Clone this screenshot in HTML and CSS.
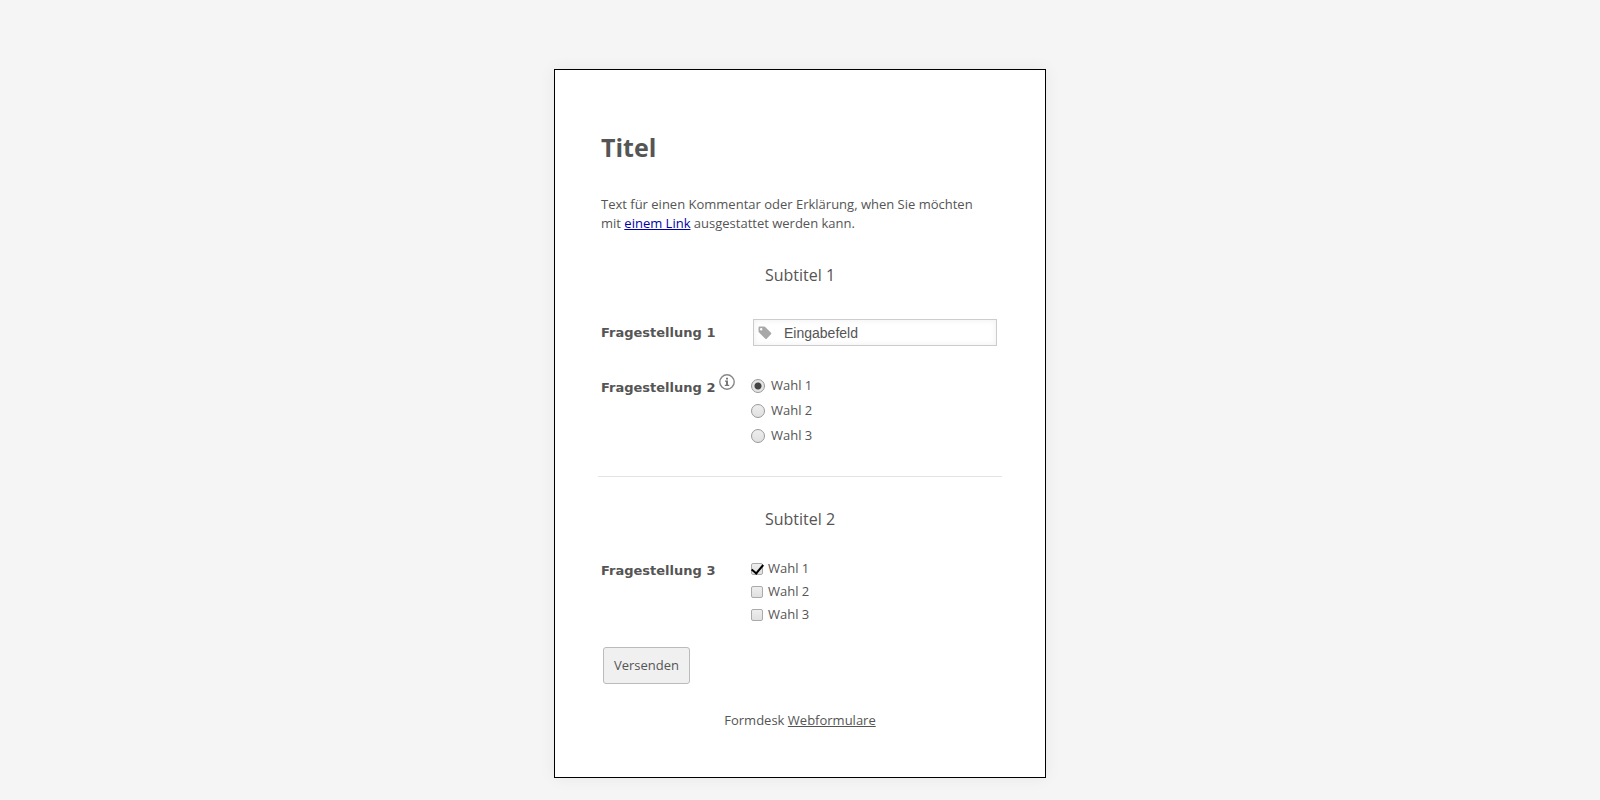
FILE: index.html
```
<!DOCTYPE html>
<html lang="de">
<head>
  <meta charset="utf-8">
  <title>Formular</title>
  <link rel="stylesheet" href="styles.css">
</head>
<body>
  <main class="form-card">
    <form>
      <h1 class="title">Titel</h1>
      <p class="intro">Text für einen Kommentar oder Erklärung, when Sie möchten mit <a href="#">einem Link</a> ausgestattet werden kann.</p>

      <h2 class="subtitle">Subtitel 1</h2>

      <div class="row input-row">
        <label class="question" for="frage1">Fragestellung 1</label>
        <div class="input-box">
          <svg class="tag-icon" viewBox="0 0 14 14" aria-hidden="true">
            <path fill="#a8a8a8" fill-rule="evenodd" d="M1.6 0.5H6Q6.7 0.5 7.2 1L13 6.8Q13.7 7.5 13 8.2L8.7 12.7Q8 13.4 7.3 12.7L1.1 6.5Q0.5 6 0.5 5.2V1.6Q0.5 0.5 1.6 0.5ZM3.2 2A1.2 1.2 0 1 0 3.2 4.4A1.2 1.2 0 1 0 3.2 2Z"/>
          </svg>
          <input type="text" id="frage1" value="Eingabefeld">
        </div>
      </div>

      <div class="row radio-row" role="radiogroup" aria-labelledby="frage2">
        <div class="question">
          <span id="frage2">Fragestellung 2</span>
          <svg class="info-icon" viewBox="0 0 16 16" aria-hidden="true">
            <circle cx="8" cy="8" r="7.2" fill="#fff" stroke="#888" stroke-width="1.4"/>
            <path fill="#777" d="M7 3.8h2v1.8h-2zM6 6.6h3v4.2h1.2v1.2h-4.4v-1.2h1.2v-3h-1z"/>
          </svg>
        </div>
        <div class="options">
          <label><input type="radio" name="wahl" checked>Wahl 1</label>
          <label><input type="radio" name="wahl">Wahl 2</label>
          <label><input type="radio" name="wahl">Wahl 3</label>
        </div>
      </div>

      <hr>

      <h2 class="subtitle">Subtitel 2</h2>

      <div class="row check-row" role="group" aria-labelledby="frage3">
        <div class="question" id="frage3">Fragestellung 3</div>
        <div class="options">
          <label><input type="checkbox" checked>Wahl 1</label>
          <label><input type="checkbox">Wahl 2</label>
          <label><input type="checkbox">Wahl 3</label>
        </div>
      </div>

      <button type="button" class="send">Versenden</button>
    </form>
    <footer>Formdesk <a href="#">Webformulare</a></footer>
  </main>
</body>
</html>
```

FILE: styles.css
```
* {
  box-sizing: border-box;
}

body {
  margin: 0;
  padding: 69px 16px 22px;
  background-color: #f5f5f5;
  color: #555;
  font-family: 'Open Sans', sans-serif;
  font-size: 13px;
  line-height: 19px;
}

.form-card {
  max-width: 492px;
  margin: 0 auto;
  padding: 61px 43px 47px;
  background-color: #fff;
  border: 1px solid #000;
  box-shadow: 0 0 16px rgba(0, 0, 0, 0.06);
}

.title {
  margin: 0 3px 32px;
  font-size: 25px;
  line-height: 32px;
}

.intro {
  margin: 0 16px 30px 3px;
}

.intro a {
  color: #00a;
}

.subtitle {
  margin: 0;
  font-size: 16px;
  font-weight: normal;
  line-height: 24px;
  text-align: center;
}

.row {
  display: flex;
  padding-left: 3px;
}

.question {
  width: 150px;
  font-family: 'DejaVu Sans', sans-serif;
  font-size: 13px;
  font-weight: bold;
}

.input-row {
  align-items: center;
  margin-top: 32px;
}

.input-box {
  position: relative;
  flex: 1;
  margin: 0 5px 0 2px;
}

.input-box input {
  display: block;
  width: 100%;
  height: 27px;
  padding: 0 8px 0 30px;
  border: 1px solid #ccc;
  box-shadow: inset 0 0 6px #eee;
  color: #555;
  font-family: 'Liberation Sans', Arial, sans-serif;
  font-size: 14px;
}

.tag-icon {
  position: absolute;
  top: 7px;
  left: 5px;
  width: 14px;
  height: 14px;
}

.radio-row {
  margin-top: 27px;
}

.radio-row .question {
  display: flex;
  gap: 4px;
  padding-top: 5px;
}

.info-icon {
  width: 16px;
  height: 16px;
  margin-top: -4px;
}

.options {
  display: flex;
  flex-direction: column;
}

.options label {
  display: flex;
  align-items: center;
}

.radio-row label {
  height: 25px;
}

.check-row label {
  height: 23px;
}

.options input {
  appearance: none;
  margin: 0;
  border: 1px solid #aaa;
  background: linear-gradient(#eee, #e0e0e0);
}

.radio-row input {
  width: 14px;
  height: 14px;
  margin-right: 6px;
  border-color: #999;
  border-radius: 50%;
}

.radio-row input:checked {
  background: radial-gradient(circle, #444 3px, #e4e4e4 4px);
}

.check-row input {
  width: 12px;
  height: 12px;
  margin-right: 5px;
  border-radius: 2px;
}

.check-row input:checked {
  position: relative;
}

.check-row input:checked::after {
  content: '';
  position: absolute;
  top: -2px;
  left: 2px;
  width: 5px;
  height: 10px;
  border: solid #000;
  border-width: 0 2px 2px 0;
  transform: rotate(40deg);
}

hr {
  margin: 28px 0 30px;
  border: 0;
  border-top: 1px solid #e4e4e4;
}

.check-row {
  margin-top: 26px;
}

.check-row .question {
  padding-top: 4px;
}

.send {
  display: block;
  height: 37px;
  margin: 21px 0 0 5px;
  padding: 0 10px;
  background-color: #f0f0f0;
  border: 1px solid #bbb;
  border-radius: 3px;
  color: #555;
  font: inherit;
}

footer {
  margin-top: 27px;
  text-align: center;
}

footer a {
  color: inherit;
}
```
